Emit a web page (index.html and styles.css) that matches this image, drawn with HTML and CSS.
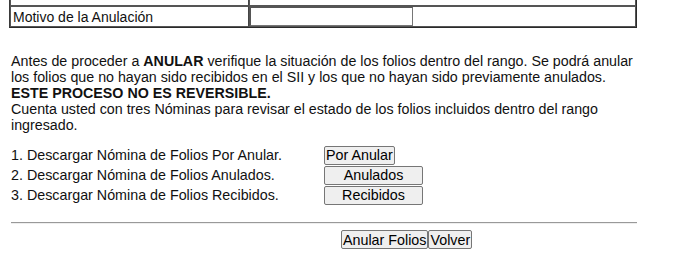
FILE: index.html
```html
<!DOCTYPE html>
<html>
<head>
<meta charset="utf-8">
<link rel="stylesheet" href="styles.css">
</head>
<body>
<div class="page">
  <table class="form-table">
    <tr class="prev-row"><td class="label">&nbsp;</td><td class="field">&nbsp;</td></tr>
    <tr><td class="label">Motivo de la Anulación</td><td class="field"><input type="text" class="motivo"></td></tr>
  </table>

  <p class="info">Antes de proceder a <b>ANULAR</b> verifique la situación de los folios dentro del rango. Se podrá anular los folios que no hayan sido recibidos en el SII y los que no hayan sido previamente anulados.<br><b>ESTE PROCESO NO ES REVERSIBLE.</b><br>Cuenta usted con tres Nóminas para revisar el estado de los folios incluidos dentro del rango ingresado.</p>

  <div class="downloads">
    <div class="dl-row"><span class="dl-text">1. Descargar Nómina de Folios Por Anular.</span><button class="btn">Por Anular</button></div>
    <div class="dl-row"><span class="dl-text">2. Descargar Nómina de Folios Anulados.</span><button class="btn wide">Anulados</button></div>
    <div class="dl-row"><span class="dl-text">3. Descargar Nómina de Folios Recibidos.</span><button class="btn wide">Recibidos</button></div>
  </div>

  <hr class="sep">

  <div class="actions">
    <button class="btn">Anular Folios</button><button class="btn">Volver</button>
  </div>
</div>
</body>
</html>
```

FILE: styles.css
```css
html, body {
  margin: 0;
  padding: 0;
  background: #ffffff;
}
body {
  font-family: "Liberation Sans", Arial, sans-serif;
  color: #111;
}
.page {
  width: 628px;
  margin-left: 9px;
}
.form-table {
  width: 100%;
  border-collapse: separate;
  border-spacing: 0;
  border: 1px solid #3a3a3a;
  border-right-color: #2a2a2a;
  border-bottom-color: #2a2a2a;
  margin-top: -16px;
}
.form-table td {
  border: 1px solid #555;
  padding: 0;
  font-size: 14px;
  height: 19px;
}
.prev-row td {
  height: 19px;
}
.form-table td.label {
  width: 235px;
  padding-left: 2px;
  border-right: 1px solid #444;
}
.form-table td.field {
  padding: 0;
}
.motivo {
  display: block;
  width: 163px;
  height: 19px;
  box-sizing: border-box;
  margin: 0;
  border: 1px solid #767676;
  border-top-color: #555;
  border-left-color: #555;
  padding: 0;
}
.info {
  margin: 25px 0 0 2px;
  font-size: 14.25px;
  line-height: 16px;
}
.downloads {
  margin: 12px 0 0 2px;
  display: flex;
  flex-direction: column;
}
.dl-row {
  display: flex;
  align-items: center;
  height: 20px;
}
.dl-text {
  width: 313px;
  font-size: 14.3px;
}
.btn {
  font-family: "Liberation Sans", Arial, sans-serif;
  font-size: 14.3px;
  color: #000;
  background: #efefef;
  border: 1px solid #767676;
  border-radius: 2px;
  padding: 0 1px;
  height: 19px;
  line-height: 16px;
  margin: 0;
}
.btn.wide {
  width: 99px;
}
.sep {
  margin: 17px 0 0 2px;
  border: 0;
  border-top: 1px solid #999;
  border-bottom: 1px solid #eee;
  height: 0;
}
.actions {
  margin: 6px 0 0 332px;
  display: flex;
}
```
